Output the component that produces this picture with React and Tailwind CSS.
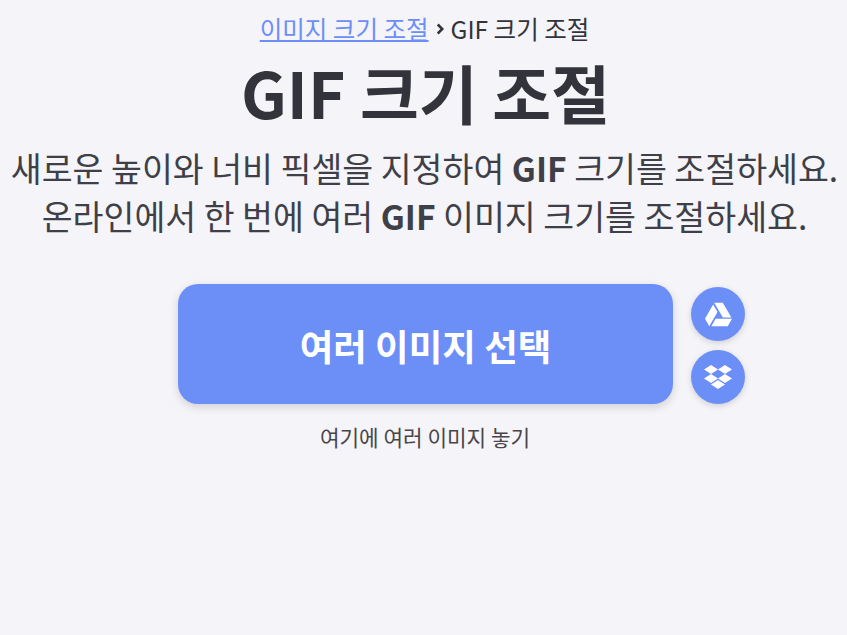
import React from "react";
import { FaGoogleDrive, FaDropbox } from "react-icons/fa";

function App() {
  return (
    <div className="min-h-[635px] bg-[#f4f4f9] text-center text-[#33333b] font-['Noto_Sans_CJK_KR','Noto_Sans',sans-serif] overflow-hidden">
      {/* Breadcrumb */}
      <div className="pt-[8px] pl-[2px] h-[50px] text-[24.5px] leading-[40px] flex justify-center items-center">
        <a href="#" className="text-[#6c8ef7] underline decoration-2">이미지 크기 조절</a>
        <svg viewBox="0 0 10 16" className="mx-[7px] w-[8px] h-[12px]" fill="none" stroke="currentColor" strokeWidth="3.4">
          <path d="M2 2l6 6-6 6" />
        </svg>
        <span>GIF 크기 조절</span>
      </div>

      <h1 className="text-[64px] leading-[80px] font-bold mt-[1px] pl-[4px]">GIF 크기 조절</h1>

      <div className="mt-[13px] pl-[2px] text-[33.6px] leading-[48px] whitespace-nowrap text-[#3f3f47]">
        <p>새로운 높이와 너비 픽셀을 지정하여 <b>GIF</b> 크기를 조절하세요.</p>
        <p>온라인에서 한 번에 여러 <b>GIF</b> 이미지 크기를 조절하세요.</p>
      </div>

      {/* Upload */}
      <div className="mt-[44px] flex justify-center pl-[76px]">
        <button className="w-[495px] h-[120px] pt-[4px] rounded-[20px] bg-[#6c8ef7] text-white text-[36.5px] font-semibold shadow-[0_3px_10px_rgba(0,0,0,0.15)]">
          여러 이미지 선택
        </button>
        <div className="ml-[18px] pt-[3px] flex flex-col gap-[9px]">
          <button className="w-[54px] h-[54px] rounded-full bg-[#6c8ef7] text-white flex items-center justify-center shadow-[0_2px_6px_rgba(0,0,0,0.15)]">
            <FaGoogleDrive className="text-[27px]" />
          </button>
          <button className="w-[54px] h-[54px] rounded-full bg-[#6c8ef7] text-white flex items-center justify-center shadow-[0_2px_6px_rgba(0,0,0,0.15)]">
            <FaDropbox className="text-[28px]" />
          </button>
        </div>
      </div>
      <p className="mt-[17px] pl-[3px] text-[21.3px] leading-[32px] text-[#4a4548]">여기에 여러 이미지 놓기</p>
    </div>
  );
}

export default App;
